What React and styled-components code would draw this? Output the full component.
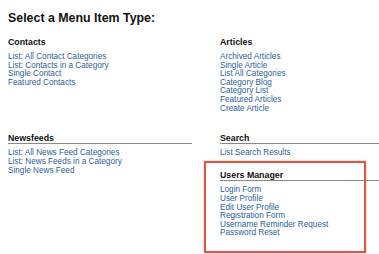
import React from "react";
import styled, { createGlobalStyle } from "styled-components";

const Global = createGlobalStyle`
  html, body {
    margin: 0;
    padding: 0;
    background: #ffffff;
    overflow: hidden;
  }
  body {
    font-family: "Liberation Sans", Arial, Helvetica, sans-serif;
  }
`;

const Page = styled.div`
  width: 379px;
  height: 254px;
  box-sizing: border-box;
  padding: 10.6px 0 0 8px;
  overflow: hidden;
`;

const Title = styled.h2`
  margin: 0;
  font-size: 12.4px;
  line-height: 14px;
  font-weight: bold;
  color: #111;
`;

const Grid = styled.div`
  margin-top: 12px;
  display: grid;
  grid-template-columns: 184px 1fr;
  column-gap: 28px;
  row-gap: 19.6px;
`;

const Column = styled.div`
  display: flex;
  flex-direction: column;
  gap: 12px;
  min-width: 0;
`;

const Section = styled.div`
  position: relative;
`;

const Heading = styled.h3`
  margin: 0 0 5px;
  padding-bottom: 0.5px;
  font-size: 8.8px;
  line-height: 10px;
  font-weight: bold;
  color: #111;
  border-bottom: 1px solid ${(p) => (p.$ruled ? "#8a8a8a" : "transparent")};
`;

const Links = styled.ul`
  margin: 0;
  padding: 0;
  list-style: none;
`;

const Item = styled.li`
  font-size: 8.2px;
  line-height: 8.6px;
  white-space: nowrap;
`;

const Link = styled.a`
  color: #2a619f;
  text-decoration: none;
`;

const Highlight = styled.div`
  position: absolute;
  left: -16px;
  top: -9px;
  width: 162px;
  height: 92px;
  box-sizing: border-box;
  border: 2.5px solid #e4533c;
  box-shadow: 0 0 2px rgba(0, 0, 0, 0.25), inset 0 0 1px rgba(0, 0, 0, 0.15);
  pointer-events: none;
`;

function MenuSection({ title, items, ruled, highlight }) {
  return (
    <Section>
      <Heading $ruled={ruled}>{title}</Heading>
      <Links>
        {items.map((t) => (
          <Item key={t}>
            <Link href="#">{t}</Link>
          </Item>
        ))}
      </Links>
      {highlight && <Highlight />}
    </Section>
  );
}

export default function App() {
  return (
    <Page>
      <Global />
      <Title>Select a Menu Item Type:</Title>
      <Grid>
        <Column>
          <MenuSection
            title="Contacts"
            items={[
              "List: All Contact Categories",
              "List: Contacts in a Category",
              "Single Contact",
              "Featured Contacts",
            ]}
          />
        </Column>
        <Column>
          <MenuSection
            title="Articles"
            items={[
              "Archived Articles",
              "Single Article",
              "List All Categories",
              "Category Blog",
              "Category List",
              "Featured Articles",
              "Create Article",
            ]}
          />
        </Column>
        <Column>
          <MenuSection
            title="Newsfeeds"
            ruled
            items={[
              "List: All News Feed Categories",
              "List: News Feeds in a Category",
              "Single News Feed",
            ]}
          />
        </Column>
        <Column>
          <MenuSection title="Search" ruled items={["List Search Results"]} />
          <MenuSection
            title="Users Manager"
            ruled
            highlight
            items={[
              "Login Form",
              "User Profile",
              "Edit User Profile",
              "Registration Form",
              "Username Reminder Request",
              "Password Reset",
            ]}
          />
        </Column>
      </Grid>
    </Page>
  );
}
